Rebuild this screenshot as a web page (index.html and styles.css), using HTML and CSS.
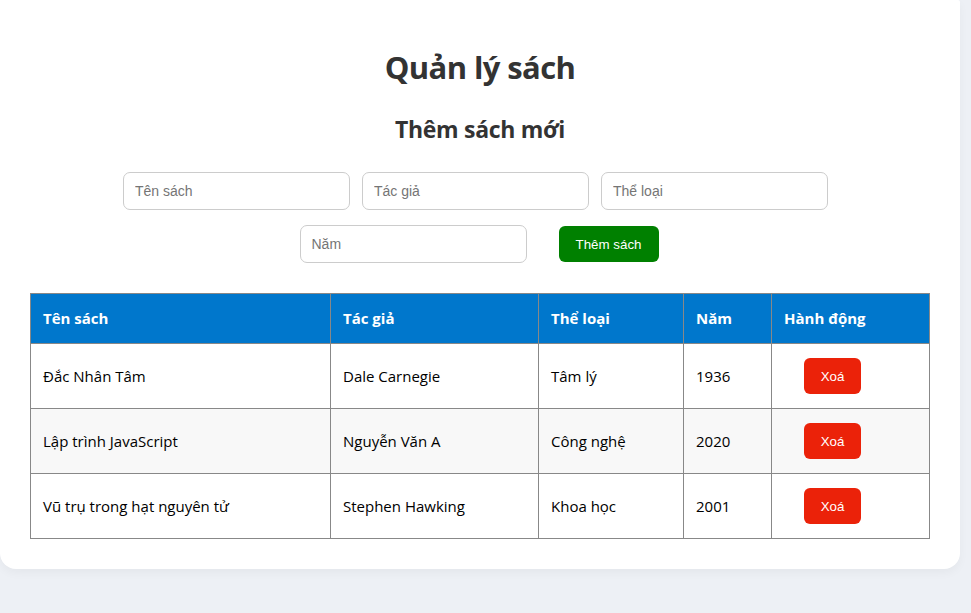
FILE: index.html
```html
<!DOCTYPE html>
<html lang="vi">
<head>
<meta charset="utf-8">
<title>Quản lý sách</title>
<link rel="stylesheet" href="styles.css">
</head>
<body>
<main class="card">
  <h1 class="title">Quản lý sách</h1>
  <h2 class="subtitle">Thêm sách mới</h2>
  <form class="book-form">
    <div class="form-row form-row-top">
      <input class="field" type="text" placeholder="Tên sách">
      <input class="field" type="text" placeholder="Tác giả">
      <input class="field" type="text" placeholder="Thể loại">
    </div>
    <div class="form-row form-row-bottom">
      <input class="field" type="text" placeholder="Năm">
      <button class="btn-add" type="button">Thêm sách</button>
    </div>
  </form>
  <table class="book-table">
    <colgroup>
      <col class="c1"><col class="c2"><col class="c3"><col class="c4"><col class="c5">
    </colgroup>
    <thead>
      <tr><th>Tên sách</th><th>Tác giả</th><th>Thể loại</th><th>Năm</th><th>Hành động</th></tr>
    </thead>
    <tbody>
      <tr><td>Đắc Nhân Tâm</td><td>Dale Carnegie</td><td>Tâm lý</td><td>1936</td><td><button class="btn-del" type="button">Xoá</button></td></tr>
      <tr><td>Lập trình JavaScript</td><td>Nguyễn Văn A</td><td>Công nghệ</td><td>2020</td><td><button class="btn-del" type="button">Xoá</button></td></tr>
      <tr><td>Vũ trụ trong hạt nguyên tử</td><td>Stephen Hawking</td><td>Khoa học</td><td>2001</td><td><button class="btn-del" type="button">Xoá</button></td></tr>
    </tbody>
  </table>
</main>
</body>
</html>
```
FILE: styles.css
```css
html, body {
  margin: 0;
  padding: 0;
}
body {
  background: #edf0f5;
  font-family: "Open Sans", "Noto Sans", sans-serif;
  color: #000;
  height: 613px;
  overflow: hidden;
}
.card {
  box-sizing: border-box;
  width: 960px;
  background: #fff;
  border-radius: 0 2px 16px 16px;
  box-shadow: 0 4px 10px rgba(0, 0, 0, 0.04);
  padding: 47px 30px 30px;
}
.title {
  margin: 0;
  font-size: 31px;
  line-height: 40px;
  font-weight: 700;
  color: #333;
  text-align: center;
  letter-spacing: -0.6px;
}
.subtitle {
  margin: 27px 0 0;
  font-size: 23px;
  line-height: 30px;
  font-weight: 700;
  color: #333;
  text-align: center;
  letter-spacing: -0.3px;
}
.book-form {
  margin-top: 28px;
  display: flex;
  flex-direction: column;
  gap: 15px;
}
.form-row {
  display: flex;
  justify-content: center;
  align-items: center;
}
.form-row-top {
  gap: 12px;
  padding-right: 9px;
}
.form-row-bottom {
  gap: 32px;
  padding-right: 2px;
}
.field {
  box-sizing: border-box;
  width: 227px;
  height: 38px;
  padding: 0 11px;
  border: 1px solid #ccc;
  border-radius: 7px;
  font-family: "Liberation Sans", Arial, sans-serif;
  font-size: 14px;
  color: #000;
  background: #fff;
  outline: none;
}
.field::placeholder {
  color: #757575;
}
.btn-add {
  box-sizing: border-box;
  width: 100px;
  height: 36px;
  border: none;
  border-radius: 6px;
  background: #008000;
  color: #fff;
  font-family: "Liberation Sans", Arial, sans-serif;
  font-size: 13.33px;
  padding: 0;
}
.book-table {
  margin-top: 30px;
  width: 899px;
  border-collapse: collapse;
  table-layout: fixed;
}
.c1 { width: 300px; }
.c2 { width: 208px; }
.c3 { width: 145px; }
.c4 { width: 88px; }
.c5 { width: 158px; }
.book-table th,
.book-table td {
  border: 1px solid #888;
  text-align: left;
  padding: 14px 12px;
  font-size: 15px;
  line-height: 21px;
}
.book-table th {
  background: #0077cc;
  color: #fff;
  font-weight: 700;
}
.book-table td {
  color: #000;
  height: 36px;
}
.book-table tbody tr:nth-child(2) td {
  background: #f8f8f8;
}
.btn-del {
  display: block;
  box-sizing: border-box;
  width: 57px;
  height: 36px;
  margin-left: 20px;
  border: none;
  border-radius: 6px;
  background: #eb2209;
  color: #fff;
  font-family: "Liberation Sans", Arial, sans-serif;
  font-size: 13.33px;
  padding: 0;
}
```
